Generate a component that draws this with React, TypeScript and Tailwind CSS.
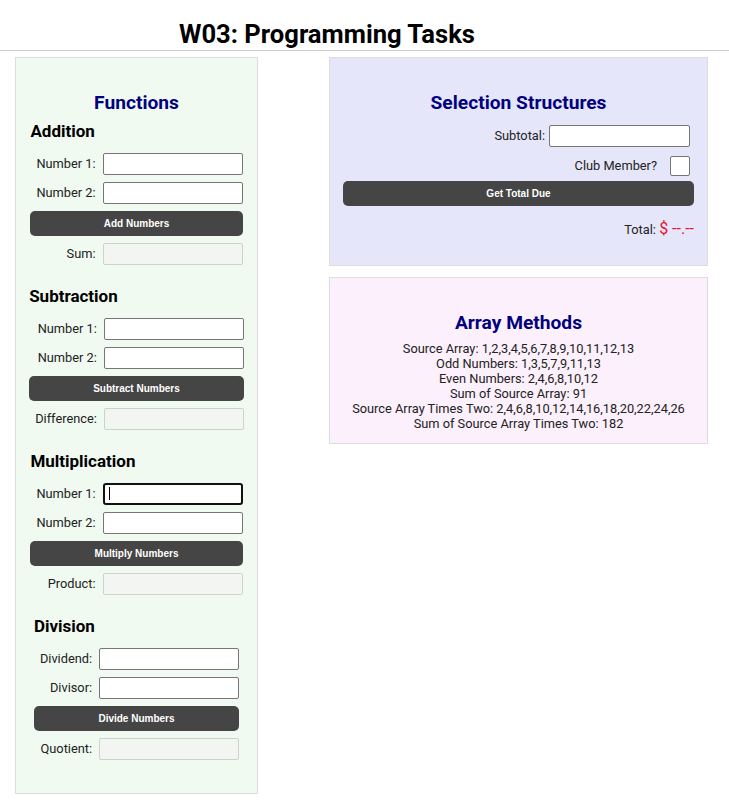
import React from "react";

type Row = { label: string; disabled?: boolean; focused?: boolean };

type Task = {
    title: string;
    rows: Row[];
    button: string;
    result: string;
};

const tasks: Task[] = [
    {
        title: "Addition",
        rows: [{ label: "Number 1:" }, { label: "Number 2:" }],
        button: "Add Numbers",
        result: "Sum:",
    },
    {
        title: "Subtraction",
        rows: [{ label: "Number 1:" }, { label: "Number 2:" }],
        button: "Subtract Numbers",
        result: "Difference:",
    },
    {
        title: "Multiplication",
        rows: [{ label: "Number 1:", focused: true }, { label: "Number 2:" }],
        button: "Multiply Numbers",
        result: "Product:",
    },
    {
        title: "Division",
        rows: [{ label: "Dividend:" }, { label: "Divisor:" }],
        button: "Divide Numbers",
        result: "Quotient:",
    },
];

const arrayLines = [
    "Source Array: 1,2,3,4,5,6,7,8,9,10,11,12,13",
    "Odd Numbers: 1,3,5,7,9,11,13",
    "Even Numbers: 2,4,6,8,10,12",
    "Sum of Source Array: 91",
    "Source Array Times Two: 2,4,6,8,10,12,14,16,18,20,22,24,26",
    "Sum of Source Array Times Two: 182",
];

const btn =
    "h-[25px] w-full rounded-[5px] bg-[#454545] text-white text-[10px] font-bold font-['Liberation_Sans',Arial,sans-serif]";

function TaskSection({ task }: { task: Task }) {
    return (
        <div className="grid grid-cols-[auto_140px] gap-y-[7px] items-center">
            <h3 className="col-span-2 mb-[5px] text-[17px] leading-[19px] font-bold text-black">
                {task.title}
            </h3>
            {task.rows.map((row, idx) => (
                <React.Fragment key={task.title + idx}>
                    <label className="pl-[6px] pr-[7px] text-right text-[12.8px] text-[#222]">{row.label}</label>
                    {row.focused ? (
                        <div className="relative">
                            <input
                                type="text"
                                className="block h-[22px] w-[140px] rounded-[3px] border-2 border-[#111] bg-white outline-none"
                            />
                            <span className="absolute left-[6px] top-[4px] h-[13px] w-px bg-black"></span>
                        </div>
                    ) : (
                        <input
                            type="text"
                            className="block h-[22px] w-[140px] rounded-[2px] border border-[#767676] bg-white outline-none"
                        />
                    )}
                </React.Fragment>
            ))}
            <button className={"col-span-2 " + btn}>{task.button}</button>
            <label className="pl-[6px] pr-[7px] text-right text-[12.8px] text-[#222]">{task.result}</label>
            <input
                type="text"
                disabled
                className="block h-[22px] w-[140px] rounded-[2px] border border-[#cbd3cb] bg-[#f2f5f2]"
            />
        </div>
    );
}

export default function App() {
    return (
        <div className="min-h-[809px] bg-white font-['Roboto','Liberation_Sans',sans-serif] text-[#222]">
            <header className="border-b border-[#cccccc]">
                <h1 className="pt-[19px] pb-px pr-[75px] text-center text-[25.6px] leading-[30px] font-bold text-black">
                    W03: Programming Tasks
                </h1>
            </header>

            <main className="flex items-start pl-[15px] pt-[6px]">
                <section className="w-[243px] border border-[#dddddd] bg-[#f0faf0] pt-[34px] pb-[33px]">
                    <h2 className="mb-[9px] text-center text-[19.2px] leading-[21px] font-bold text-[#000080]">
                        Functions
                    </h2>
                    <div className="flex flex-col items-center gap-[22px]">
                        {tasks.map((task) => (
                            <TaskSection task={task} key={task.title} />
                        ))}
                    </div>
                </section>

                <div className="ml-[71px] flex w-[379px] flex-col">
                    <section className="border border-[#dddddd] bg-[#e6e6fa] px-[13px] pt-[34px] pb-[26px]">
                        <h2 className="mb-[12px] text-center text-[19.2px] leading-[21px] font-bold text-[#000080]">
                            Selection Structures
                        </h2>
                        <div className="flex items-center justify-end pr-[4px]">
                            <label className="mr-[4px] text-[12.8px]">Subtotal:</label>
                            <input
                                type="text"
                                className="block h-[22px] w-[141px] rounded-[2px] border border-[#767676] bg-white outline-none"
                            />
                        </div>
                        <div className="mt-[9px] flex items-center justify-end pr-[4px]">
                            <label className="mr-[13px] text-[12.8px]">Club Member?</label>
                            <span className="block h-[20px] w-[20px] rounded-[2px] border border-[#767676] bg-white"></span>
                        </div>
                        <button className={"mt-[5px] " + btn}>Get Total Due</button>
                        <p className="mt-[13px] text-right text-[12.8px] leading-[19px]">
                            Total: <span className="text-[16px] text-[#e3132b]">$ --.--</span>
                        </p>
                    </section>

                    <section className="mt-[11px] border border-[#dddddd] bg-[#fcf0fc] pt-[34px] pb-[12px]">
                        <h2 className="mb-[8px] text-center text-[19.2px] leading-[21px] font-bold text-[#000080]">
                            Array Methods
                        </h2>
                        {arrayLines.map((line, idx) => (
                            <p key={"line" + idx} className="text-center text-[12.8px] leading-[15px]">
                                {line}
                            </p>
                        ))}
                    </section>
                </div>
            </main>
        </div>
    );
}
